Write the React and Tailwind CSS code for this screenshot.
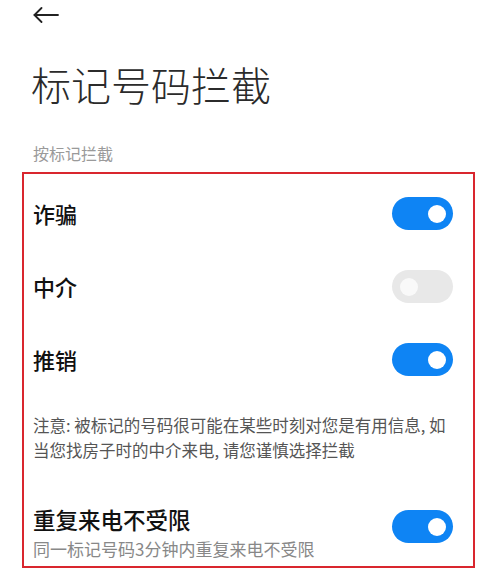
import { useState } from 'react';

function Toggle({ on, onClick }) {
  return (
    <button
      onClick={onClick}
      className={`relative w-[61px] h-[33px] rounded-full shrink-0 ${on ? 'bg-[#0e84f4]' : 'bg-[#e8e8e8]'}`}
    >
      <span
        className={`absolute top-[7.5px] w-[18px] h-[18px] rounded-full ${on ? 'right-[7px] bg-white' : 'left-[8px] bg-[#f9f9f9]'}`}
      />
    </button>
  );
}

export default function App() {
  const [rows, setRows] = useState({ fraud: true, agent: false, promo: true, repeat: true });
  const flip = k => setRows(r => ({ ...r, [k]: !r[k] }));

  return (
    <div className="w-[486px] h-[585px] bg-white overflow-hidden" style={{ fontFamily: '"Noto Sans CJK SC", "Noto Sans", sans-serif' }}>
      <div className="pl-[33px] pt-[7px]">
        <svg width="26" height="16" viewBox="0 0 26 16" fill="none" stroke="#222" strokeWidth="1.8" strokeLinecap="round" strokeLinejoin="round">
          <path d="M25 8H1.5" />
          <path d="M8.5 1L1.5 8l7 7" />
        </svg>
      </div>

      <h1 className="pl-[31px] mt-[35px] text-[40px] leading-[52px] font-light text-[#2b2b2b]">标记号码拦截</h1>

      <div className="pl-[33px] mt-[33px] text-[16px] leading-[20px] text-[#9a9a9a]">按标记拦截</div>

      <div className="ml-[22px] w-[453px] mt-[9px] border-2 border-[#d9262e] pl-[9px] pr-[20px] pt-[3px] pb-[5px]">
        {[
          { k: 'fraud', label: '诈骗' },
          { k: 'agent', label: '中介' },
          { k: 'promo', label: '推销' },
        ].map(({ k, label }) => (
          <div key={k} className="h-[73px] flex items-center justify-between">
            <span className="text-[22px] font-medium text-[#111]">{label}</span>
            <Toggle on={rows[k]} onClick={() => flip(k)} />
          </div>
        ))}

        <p className="mt-[17px] text-[16.5px] leading-[25px] text-[#555]">
          注意: 被标记的号码很可能在某些时刻对您是有用信息, 如当您找房子时的中介来电, 请您谨慎选择拦截
        </p>

        <div className="mt-[42px] flex items-center justify-between">
          <div>
            <div className="text-[22.5px] leading-[28px] font-medium text-[#111]">重复来电不受限</div>
            <div className="mt-[4px] text-[17px] leading-[24px] text-[#888]">同一标记号码3分钟内重复来电不受限</div>
          </div>
          <div className="-mt-[8px]">
            <Toggle on={rows.repeat} onClick={() => flip('repeat')} />
          </div>
        </div>
      </div>
    </div>
  );
}
